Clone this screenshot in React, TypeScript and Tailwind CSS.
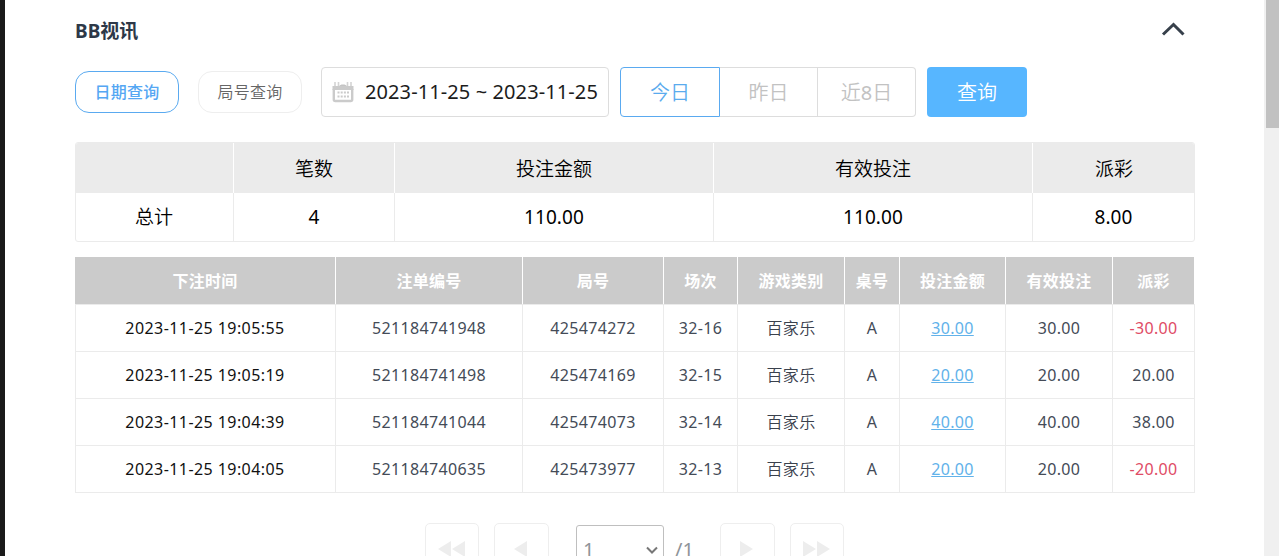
import React from "react";

const font = "font-['Noto_Sans','Noto_Sans_CJK_SC',sans-serif]";

const summaryCols = "grid grid-cols-[159px_161px_319px_319px_162px]";
const detailCols =
  "grid grid-cols-[261px_187px_141px_74px_107px_55px_106px_107px_82px]";

const summaryHead = ["", "笔数", "投注金额", "有效投注", "派彩"];
const summaryRow = ["总计", "4", "110.00", "110.00", "8.00"];

const detailHead = ["下注时间", "注单编号", "局号", "场次", "游戏类别", "桌号", "投注金额", "有效投注", "派彩"];

const rows = [
  ["2023-11-25 19:05:55", "521184741948", "425474272", "32-16", "百家乐", "A", "30.00", "30.00", "-30.00"],
  ["2023-11-25 19:05:19", "521184741498", "425474169", "32-15", "百家乐", "A", "20.00", "20.00", "20.00"],
  ["2023-11-25 19:04:39", "521184741044", "425474073", "32-14", "百家乐", "A", "40.00", "40.00", "38.00"],
  ["2023-11-25 19:04:05", "521184740635", "425473977", "32-13", "百家乐", "A", "20.00", "20.00", "-20.00"],
];

function cellStyle(col: number, value: string) {
  if (col === 0) return "text-[#111] tracking-[0.43px]";
  if (col === 4) return "font-[350] text-[#3a414d]";
  if (col === 6) return "text-[#62b2ea] underline underline-offset-1";
  if (value.startsWith("-")) return "text-[#e04c66]";
  return "text-[#444b57]";
}

function CalendarIcon() {
  return (
    <svg width="22" height="22" viewBox="0 0 22 22" fill="none">
      <path d="M3 1v4M6.500 1v4M15.500 1v4M19 1v4" stroke="#d4d4d4" strokeWidth="1.6" />
      <path d="M7.500 6V4.500L9.500 3.500h3L14.500 4.500V6" fill="#c4c4c4" />
      <path d="M0.500 5h21v4h-21z" fill="#cbcbcb" />
      <path d="M1.800 8v10.500q0 1.500 1.500 1.500h15.400q1.500 0 1.500-1.500V8" stroke="#cbcbcb" strokeWidth="2.400" />
      <path
        d="M5.500 10.500h2v2h-2zM8.700 10.500h2v2h-2zM11.900 10.500h2v2h-2zM15 10.500h2v2h-2zM5.500 14.500h2v2h-2zM8.700 14.500h2v2h-2zM11.900 14.500h2v2h-2zM15 14.500h2v2h-2z"
        fill="#cbcbcb"
      />
    </svg>
  );
}

function PageButton({ dir, double }: { dir: "prev" | "next"; double?: boolean }) {
  return (
    <button
      className={`flex h-[50px] items-center justify-center rounded-[5px] border border-[#eeeeee] bg-white pt-px ${
        double ? "w-[54px]" : "w-[55px]"
      }`}
    >
      <svg
        className="relative -left-px"
        width={double ? 27 : 13}
        height="16"
        viewBox={double ? "0 0 27 16" : "0 0 13 16"}
        fill="#ededed"
      >
        {dir === "prev" ? <path d="M13 0v16L0 8z" /> : <path d="M0 0v16l13-8z" />}
        {double && (dir === "prev" ? <path d="M27 0v16L14 8z" /> : <path d="M14 0v16l13-8z" />)}
      </svg>
    </button>
  );
}

export default function App() {
  return (
    <div className={`flex h-[556px] w-full overflow-hidden bg-white ${font}`}>
      <div className="w-[5px] shrink-0 bg-[#1a1a1a]" />
      <main className="flex min-w-0 flex-1 flex-col pl-[70px]">
        <header className="flex h-[67px] w-[1120px] shrink-0 items-start justify-between pt-[18px] pr-[10px]">
          <h1 className="text-[19px] leading-[26px] font-bold text-[#2d3848]">BB视讯</h1>
          <svg className="mt-[3px]" width="24" height="16" viewBox="0 0 24 16" fill="none">
            <path d="M2 13.500L12.500 3.500L22.500 13.500" stroke="#37404b" strokeWidth="3" />
          </svg>
        </header>

        <div className="flex h-[50px] shrink-0 items-center">
          <button className="h-[42px] w-[104px] rounded-[14px] border border-[#5aaaf0] pb-px text-[16px] font-medium tracking-[0.3px] text-[#55a7f3]">
            日期查询
          </button>
          <button className="ml-[19px] h-[42px] w-[104px] rounded-[14px] border border-[#eeeeee] pb-px text-[16px] font-[350] tracking-[0.3px] text-[#666]">
            局号查询
          </button>
          <div className="ml-[19px] flex h-[50px] w-[288px] items-center rounded-[4px] border border-[#dddddd] pl-[10px]">
            <CalendarIcon />
            <span className="ml-[11px] text-[20px] leading-[28px] tracking-[0.1px] whitespace-nowrap text-[#1c1c1c]">
              2023-11-25 ~ 2023-11-25
            </span>
          </div>
          <div className="ml-[11px] flex h-[50px] text-[20px] font-[350] text-[#c2c2c2]">
            <button className="w-[100px] rounded-l-[4px] border border-[#5aaaf0] pt-px text-[#5aabee]">今日</button>
            <button className="w-[98px] border-y border-r border-[#dddddd] pt-px">昨日</button>
            <button className="w-[98px] rounded-r-[4px] border-y border-r border-[#dddddd] pt-px">
              近<span className="font-normal">8</span>日
            </button>
          </div>
          <button className="ml-[11px] h-[50px] w-[100px] rounded-[4px] bg-[#57b6ff] pt-px text-[20px] font-[350] text-white">
            查询
          </button>
        </div>

        <section className="mt-[25px] h-[100px] w-[1120px] shrink-0 overflow-hidden rounded-[3px] border border-[#ebebeb] text-[19px] text-black">
          <div className={`-mx-px -mt-px h-[51px] bg-[#ebebeb] font-[350] ${summaryCols}`}>
            {summaryHead.map((h, i) => (
              <div key={i} className="flex items-center justify-center border-r border-white pt-[3px] last:border-r-0">
                {h}
              </div>
            ))}
          </div>
          <div className={`-mx-px h-[48px] ${summaryCols}`}>
            {summaryRow.map((v, i) => (
              <div
                key={i}
                className="flex items-center justify-center border-r border-[#ebebeb] tracking-[0.1px] first:font-[350]"
              >
                {v}
              </div>
            ))}
          </div>
        </section>

        <section className="mt-[15px] w-[1120px] shrink-0">
          <div className={`h-[47px] bg-[#cbcbcb] text-[16px] font-bold tracking-[0.3px] text-white ${detailCols}`}>
            {detailHead.map((h, i) => (
              <div key={i} className="flex items-center justify-center border-r border-white pt-px">
                {h}
              </div>
            ))}
          </div>
          <div className="border-t border-l border-[#ebebeb]">
            {rows.map((row) => (
              <div key={row[1]} className={`-ml-px h-[47px] text-[16px] tracking-[0.33px] ${detailCols}`}>
                {row.map((v, i) => (
                  <div key={i} className="flex items-center justify-center border-r border-b border-[#ebebeb]">
                    <span className={cellStyle(i, v)}>{v}</span>
                  </div>
                ))}
              </div>
            ))}
          </div>
        </section>

        <nav className="mt-[30px] flex shrink-0 items-start pl-[350px] text-[20px] text-[#8f9499]">
          <PageButton dir="prev" double />
          <div className="ml-[15px]">
            <PageButton dir="prev" />
          </div>
          <div className="mt-[2px] ml-[27px] flex h-[50px] w-[88px] items-center justify-between rounded-[3px] border border-[#bfbfbf] pr-[5px] pl-[6px]">
            <span>1</span>
            <svg width="12" height="8" viewBox="0 0 12 8" fill="none">
              <path d="M1 1.500l5 5 5-5" stroke="#777" strokeWidth="2" />
            </svg>
          </div>
          <span className="mt-[12px] ml-[11px] w-[45px] leading-[30px]">/1</span>
          <PageButton dir="next" />
          <div className="ml-[15px]">
            <PageButton dir="next" double />
          </div>
        </nav>
      </main>
      <aside className="w-[15px] shrink-0 bg-[#f0f0f0] pl-[2px]">
        <div className="h-[128px] bg-[#c1c1c1]" />
      </aside>
    </div>
  );
}
